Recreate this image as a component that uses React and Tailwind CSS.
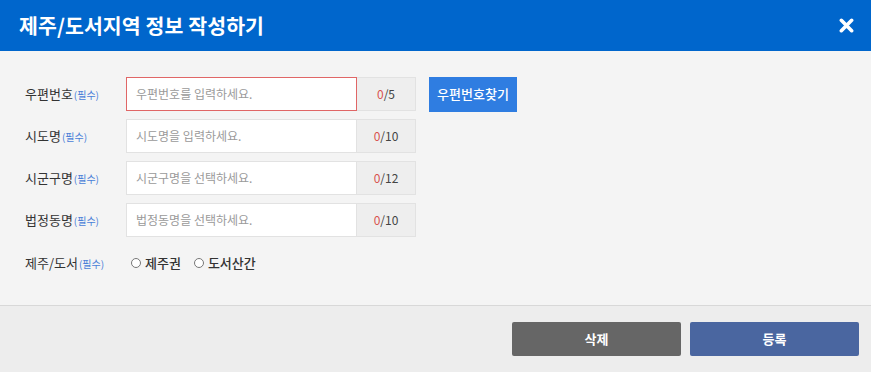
import React from "react";

const font = { fontFamily: '"Noto Sans CJK KR", "Noto Sans", sans-serif' };

function Req() {
  return <span className="text-[10px] text-[#4a80d8] ml-[1px]">(필수)</span>;
}

function Row({ label, placeholder, max, red, children }) {
  return (
    <div className="flex items-center h-[34px]">
      <div className="w-[101px] text-[13px] text-[#333] flex items-center">
        {label}
        <Req />
      </div>
      <div
        className={`w-[231px] h-full bg-white flex items-center pl-[9px] text-[12px] text-[#9a9a9a] border ${
          red ? "border-[#e06666]" : "border-[#e2e2e2]"
        }`}
      >
        {placeholder}
      </div>
      <div className="w-[59px] h-full bg-[#eeeeee] border border-l-0 border-[#e2e2e2] flex items-center justify-center text-[12px] text-[#444]">
        <span className="text-[#d9534f]">0</span>/{max}
      </div>
      {children}
    </div>
  );
}

export default function App() {
  return (
    <div className="w-[871px] h-[372px] flex flex-col bg-[#f4f4f4]" style={font}>
      <div className="h-[51px] bg-[#0066cc] flex items-center justify-between pl-[19px] pr-[17px] shrink-0">
        <div className="text-white text-[20.5px] font-bold tracking-[0.1px]">제주/도서지역 정보 작성하기</div>
        <svg width="15" height="15" viewBox="0 0 16 16">
          <path d="M2.5 2.5 L13.5 13.5 M13.5 2.5 L2.5 13.5" stroke="white" strokeWidth="3.8" strokeLinecap="round" />
        </svg>
      </div>
      <div className="flex-1 flex flex-col gap-[8px] pt-[26px] pl-[25px]">
        <Row label="우편번호" placeholder="우편번호를 입력하세요." max="5" red>
          <button className="ml-[13px] w-[88px] h-[35px] bg-[#2f7de1] text-white text-[13px] font-medium">
            우편번호찾기
          </button>
        </Row>
        <Row label="시도명" placeholder="시도명을 입력하세요." max="10" />
        <Row label="시군구명" placeholder="시군구명을 선택하세요." max="12" />
        <Row label="법정동명" placeholder="법정동명을 선택하세요." max="10" />
        <div className="flex items-center h-[36px]">
          <div className="w-[101px] text-[13px] text-[#333] flex items-center">
            제주/도서
            <Req />
          </div>
          <label className="flex items-center ml-[5px] text-[13px] text-[#333] font-medium">
            <span className="w-[10px] h-[10px] rounded-full border border-[#777] bg-white mr-[4px]" />
            제주권
          </label>
          <label className="flex items-center ml-[13px] text-[13px] text-[#333] font-medium">
            <span className="w-[10px] h-[10px] rounded-full border border-[#777] bg-white mr-[4px]" />
            도서산간
          </label>
        </div>
      </div>
      <div className="h-[67px] shrink-0 bg-[#ededed] border-t border-[#d8d8d8] flex items-center justify-end gap-[9px] pr-[12px] pb-[1px]">
        <button className="w-[169px] h-[34px] bg-[#666666] rounded-[2px] text-white text-[13px] font-bold">삭제</button>
        <button className="w-[169px] h-[34px] bg-[#4a66a0] rounded-[2px] text-white text-[13px] font-bold">등록</button>
      </div>
    </div>
  );
}
